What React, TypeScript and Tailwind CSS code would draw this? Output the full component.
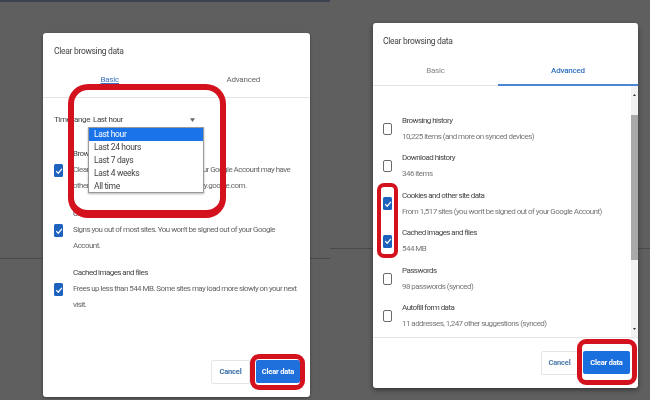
import React from "react";

function Check({ on }: { on: boolean }) {
  if (!on)
    return <div className="w-[9px] h-[12px] rounded-[2px] border-[1.5px] border-[#6b6b6b] bg-white shrink-0" />;
  return (
    <div className="w-[9px] h-[13px] rounded-[1.5px] bg-[#1d62bd] shrink-0 flex items-center justify-center">
      <svg viewBox="0 0 10 10" className="w-[8px] h-[8px]">
        <path d="M1.5 5.2 L4 7.8 L8.6 2.2" fill="none" stroke="#fff" strokeWidth="1.5" />
      </svg>
    </div>
  );
}

function LeftOption({ title, lines, top }: { title: string; lines: string[]; top: string }) {
  return (
    <div className={`flex ${top} pl-[11px] pr-[10px]`}>
      <div className="w-[19px] shrink-0 pt-[18px]">
        <Check on />
      </div>
      <div className="flex-1 min-w-0 tracking-[-0.55px]">
        <div className="text-[8px] leading-[16px] text-[#444]">{title}</div>
        {lines.map((l) => (
          <div key={l} className="text-[8px] leading-[16px] text-[#666] whitespace-nowrap">
            {l}
          </div>
        ))}
      </div>
    </div>
  );
}

const advanced = [
  { t: "Browsing history", s: "10,225 items (and more on synced devices)", on: false },
  { t: "Download history", s: "346 items", on: false },
  { t: "Cookies and other site data", s: "From 1,517 sites (you won't be signed out of your Google Account)", on: true },
  { t: "Cached images and files", s: "544 MB", on: true },
  { t: "Passwords", s: "98 passwords (synced)", on: false },
  { t: "Autofill form data", s: "11 addresses, 1,247 other suggestions (synced)", on: false },
];

const ranges = ["Last hour", "Last 24 hours", "Last 7 days", "Last 4 weeks", "All time"];

export default function App() {
  return (
    <div
      className="relative w-[650px] h-[400px] overflow-hidden bg-[#5f5f5f] flex items-start blur-[0.4px]"
      style={{ fontFamily: "Roboto, 'Liberation Sans', sans-serif" }}
    >
      {/* backdrop details */}
      <div className="absolute left-0 top-0 w-[330px] h-[2px] bg-[#3c4250]" />
      <div className="absolute left-0 top-[258px] w-[330px] h-px bg-[#4a4a4a]" />
      <div className="absolute left-[330px] top-[248px] w-[320px] h-px bg-[#4a4a4a]" />

      {/* Left dialog */}
      <div className="relative ml-[43px] mt-[33px] w-[267px] h-[364px] shrink-0 bg-white rounded-[3px] shadow-[0_1px_3px_rgba(0,0,0,0.4)] flex flex-col">
        <div className="pl-[11px] pt-[11px] text-[8.5px] leading-[14px] text-[#444] tracking-[-0.3px]">Clear browsing data</div>
        <div className="flex mt-[16px] h-[24px] border-b border-[#e4e4e4] text-[8px] tracking-[-0.2px]">
          <div className="flex-1 text-center text-[#3f73c0] underline">Basic</div>
          <div className="flex-1 text-center text-[#666]">Advanced</div>
        </div>
        <div className="flex items-center mt-[15px] pl-[11px] text-[8px] leading-[14px] text-[#444] tracking-[-0.4px]">
          <span className="w-[39px] whitespace-nowrap">Time range</span>
          <span className="w-[97px]">Last hour</span>
          <svg viewBox="0 0 8 6" className="w-[5px] h-[4px]">
            <path d="M0 0 H8 L4 6 Z" fill="#666" />
          </svg>
        </div>
        <LeftOption
          top="mt-[19px]"
          title="Browsing history"
          lines={["Clears history from all signed-in devices. Your Google Account may have", "other forms of browsing history at myactivity.google.com."]}
        />
        <LeftOption
          top="mt-[12px]"
          title="Cookies and other site data"
          lines={["Signs you out of most sites. You won't be signed out of your Google", "Account."]}
        />
        <LeftOption
          top="mt-[11px]"
          title="Cached images and files"
          lines={["Frees up less than 544 MB. Some sites may load more slowly on your next", "visit."]}
        />
        <div className="mt-auto mb-[13px] mr-[10px] flex justify-end gap-[6px] text-[7.5px] font-bold tracking-[-0.2px]">
          <button className="w-[39px] h-[24px] border border-[#e6e6e6] rounded-[2px] bg-white text-[#3d6ea8]">Cancel</button>
          <button className="w-[44px] h-[23px] rounded-[2px] bg-[#1f6fdc] text-white">Clear data</button>
        </div>

        {/* open dropdown */}
        <div className="absolute left-[45px] top-[94px] w-[116px] h-[66px] bg-white border border-[#9a9a9a] shadow-[0_1px_2px_rgba(0,0,0,0.3)] text-[8.5px] leading-[13px] text-[#444] tracking-[-0.35px]">
          {ranges.map((r, i) => (
            <div key={r} className={`pl-[5px] ${i === 0 ? "bg-[#1a73e8] text-white" : ""}`}>
              {r}
            </div>
          ))}
        </div>

        {/* red marks */}
        <div className="absolute left-[25px] top-[51px] w-[158px] h-[134px] border-[6px] border-b-[8px] border-[#d4121e] rounded-[20px]" />
        <div className="absolute left-[207px] top-[321px] w-[55px] h-[36px] border-[5px] border-[#d4121e] rounded-[9px]" />
      </div>

      {/* Right dialog */}
      <div className="relative ml-[63px] mt-[23px] w-[265px] h-[365px] shrink-0 bg-white rounded-[3px] shadow-[0_2px_5px_rgba(0,0,0,0.45)] flex flex-col">
        <div className="pl-[10px] pt-[11px] text-[8.5px] leading-[14px] text-[#444] tracking-[-0.3px]">Clear browsing data</div>
        <div className="flex mt-[17px] h-[21px] text-[8px] tracking-[-0.2px]">
          <div className="w-[125px] border-b border-[#e4e4e4] text-center text-[#888]">Basic</div>
          <div className="flex-1 border-b-2 border-[#4a86d8] text-center text-[#2f6fc0] font-medium">Advanced</div>
        </div>
        <div className="flex flex-1 min-h-0">
          <div className="flex-1 pt-[24px] pl-[10px]">
            {advanced.map((a) => (
              <div key={a.t} className="flex items-center h-[37.5px]">
                <div className="w-[19px] shrink-0">
                  <Check on={a.on} />
                </div>
                <div className="tracking-[-0.55px]">
                  <div className="text-[8px] leading-[16px] text-[#444]">{a.t}</div>
                  <div className="text-[8px] leading-[16px] text-[#777] whitespace-nowrap">{a.s}</div>
                </div>
              </div>
            ))}
          </div>
          <div className="relative w-[7px] bg-[#f1f1f1] pt-[29px] pb-[77px] flex">
            <div className="flex-1 bg-[#a9a9a9]" />
            <svg viewBox="0 0 6 4" className="absolute left-[2px] top-[8px] w-[3px] h-[2px]">
              <path d="M3 0 L6 4 H0 Z" fill="#333" />
            </svg>
            <svg viewBox="0 0 6 4" className="absolute left-[2px] bottom-[7px] w-[3px] h-[2px]">
              <path d="M0 0 H6 L3 4 Z" fill="#333" />
            </svg>
          </div>
        </div>
        <div className="h-[51px] border-t border-[#e4e4e4] shrink-0 flex justify-end items-start pt-[13px] pr-[8px] gap-[5px] text-[7.5px] font-bold tracking-[-0.2px]">
          <button className="w-[37px] h-[24px] border border-[#e6e6e6] rounded-[2px] bg-white text-[#4d7aa8]">Cancel</button>
          <button className="w-[47px] h-[23px] rounded-[2px] bg-[#1a6fdf] text-white">Clear data</button>
        </div>

        {/* red marks */}
        <div className="absolute left-[4px] top-[160px] w-[21px] h-[75px] border-[4px] border-[#d4121e] rounded-[7px]" />
        <div className="absolute left-[204px] top-[316px] w-[60px] h-[46px] border-[5px] border-[#d4121e] rounded-[9px]" />
      </div>
    </div>
  );
}
